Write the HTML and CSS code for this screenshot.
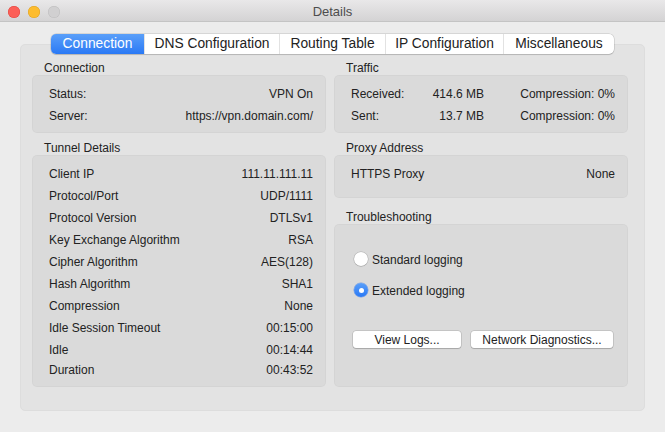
FILE: index.html
```html
<!DOCTYPE html>
<html lang="en">
<head>
<meta charset="utf-8">
<title>Details</title>
<link rel="stylesheet" href="styles.css">
</head>
<body>
<div class="window">
  <header class="titlebar">
    <div class="lights">
      <span class="light light-close"></span>
      <span class="light light-min"></span>
      <span class="light light-zoom"></span>
    </div>
    <div class="title">Details</div>
    <div></div>
  </header>
  <main class="content">
    <nav class="tabs">
      <span class="tab tab-conn selected">Connection</span>
      <span class="tab tab-dns">DNS Configuration</span>
      <span class="tab tab-route">Routing Table</span>
      <span class="tab tab-ip">IP Configuration</span>
      <span class="tab tab-misc">Miscellaneous</span>
    </nav>
    <section class="tabbox">
      <div class="col">
        <div class="group">
          <div class="group-label">Connection</div>
          <div class="group-box">
            <div class="row"><span>Status:</span><span>VPN On</span></div>
            <div class="row"><span>Server:</span><span>https://vpn.domain.com/</span></div>
          </div>
        </div>
        <div class="group group-next">
          <div class="group-label">Tunnel Details</div>
          <div class="group-box">
            <div class="row"><span>Client IP</span><span>111.11.111.11</span></div>
            <div class="row"><span>Protocol/Port</span><span>UDP/1111</span></div>
            <div class="row"><span>Protocol Version</span><span>DTLSv1</span></div>
            <div class="row"><span>Key Exchange Algorithm</span><span>RSA</span></div>
            <div class="row"><span>Cipher Algorithm</span><span>AES(128)</span></div>
            <div class="row"><span>Hash Algorithm</span><span>SHA1</span></div>
            <div class="row"><span>Compression</span><span>None</span></div>
            <div class="row"><span>Idle Session Timeout</span><span>00:15:00</span></div>
            <div class="row"><span>Idle</span><span>00:14:44</span></div>
            <div class="row row-last"><span>Duration</span><span>00:43:52</span></div>
          </div>
        </div>
      </div>
      <div class="col">
        <div class="group">
          <div class="group-label">Traffic</div>
          <div class="group-box">
            <div class="traffic-row">
              <div class="traffic-main"><span>Received:</span><span>414.6 MB</span></div>
              <span class="traffic-comp">Compression: 0%</span>
            </div>
            <div class="traffic-row">
              <div class="traffic-main"><span>Sent:</span><span>13.7 MB</span></div>
              <span class="traffic-comp">Compression: 0%</span>
            </div>
          </div>
        </div>
        <div class="group group-next">
          <div class="group-label">Proxy Address</div>
          <div class="group-box proxy-box">
            <div class="row"><span>HTTPS Proxy</span><span>None</span></div>
          </div>
        </div>
        <div class="group group-trouble">
          <div class="group-label">Troubleshooting</div>
          <div class="group-box trouble-box">
            <label class="radio-row"><span class="radio"></span><span class="radio-text">Standard logging</span></label>
            <label class="radio-row radio-row-second"><span class="radio radio-on"></span><span class="radio-text">Extended logging</span></label>
            <div class="buttons">
              <span class="btn btn-logs">View Logs...</span>
              <span class="btn btn-diag">Network Diagnostics...</span>
            </div>
          </div>
        </div>
      </div>
    </section>
  </main>
</div>
</body>
</html>
```

FILE: styles.css
```css
* { box-sizing: border-box; }

html, body {
  margin: 0;
  padding: 0;
}

body {
  width: 665px;
  height: 432px;
  overflow: hidden;
  background: #ececec;
  font-family: "Liberation Sans", Arial, sans-serif;
  font-size: 12px;
  color: #222222;
}

.window {
  width: 665px;
  height: 432px;
  background: #ececec;
}

.titlebar {
  height: 22px;
  display: grid;
  grid-template-columns: 1fr auto 1fr;
  align-items: center;
  background: linear-gradient(#e9e8e9, #d4d3d4);
  border-bottom: 1px solid #c4c4c4;
}

.lights {
  display: flex;
  gap: 8px;
  padding-left: 8px;
  padding-top: 1px;
}

.light {
  width: 12px;
  height: 12px;
  border-radius: 50%;
}

.light-close { background: #fc5f57; box-shadow: inset 0 0 0 0.5px #e0443e; }
.light-min { background: #fdbc2e; box-shadow: inset 0 0 0 0.5px #dea123; }
.light-zoom { background: #d1d0d1; box-shadow: inset 0 0 0 0.5px #bdbcbd; }

.title {
  color: #4d4d4d;
  font-size: 13px;
  line-height: 23px;
}

.content {
  padding-top: 12px;
}

.tabs {
  position: relative;
  z-index: 1;
  display: flex;
  width: 563px;
  height: 20px;
  margin: 0 auto -10px;
  background: #fff;
  border-radius: 5px;
  box-shadow: 0 0 0 0.5px rgba(0,0,0,0.18), 0 1px 1px rgba(0,0,0,0.12);
}

.tab {
  height: 20px;
  line-height: 20px;
  font-size: 13.8px;
  text-align: center;
  color: #222222;
  border-left: 1px solid #e2e2e2;
}

.tab:first-child { border-left: none; }

.tab-conn { width: 93px; }
.tab-dns { width: 135px; }
.tab-route { width: 106px; }
.tab-ip { width: 118px; }
.tab-misc { width: 111px; }

.tab.selected {
  color: #fff;
  background: linear-gradient(#5a9ff9, #2a79f5);
  border-radius: 5px 0 0 5px;
}

.tabbox {
  margin: 0 20px;
  height: 367px;
  background: #e3e3e3;
  border: 1px solid #dddddd;
  border-radius: 5px;
  padding: 14px 0 0 11px;
  display: grid;
  grid-template-columns: 294px 294px;
  column-gap: 8px;
  align-content: start;
}

.col {
  display: flex;
  flex-direction: column;
}

.group {
  display: flex;
  flex-direction: column;
}

.group-next { margin-top: 6px; }

.group-trouble {
  margin-top: 10px;
  flex: 1;
}

.group-label {
  height: 16px;
  line-height: 18px;
  padding-left: 12px;
}

.group-box {
  background: #dadada;
  border-radius: 5px;
  box-shadow: inset 0 0 0 1px rgba(0,0,0,0.025);
  padding: 7px 13px 7px 17px;
}

.row {
  display: flex;
  justify-content: space-between;
  height: 22px;
  line-height: 24px;
}

.row-last {
  height: 20px;
  line-height: 21px;
}

.traffic-row {
  display: grid;
  grid-template-columns: 133px 1fr;
  height: 22px;
  line-height: 24px;
}

.traffic-main {
  display: flex;
  justify-content: space-between;
}

.traffic-comp {
  text-align: right;
}

.proxy-box { padding-bottom: 14px; }

.trouble-box {
  flex: 1;
  padding: 25px 14px 0 20px;
}

.radio-row {
  display: flex;
  align-items: center;
  gap: 4px;
  height: 20px;
  line-height: 20px;
}

.radio-text {
  padding-top: 2px;
}

.radio-row-second { margin-top: 11px; }

.radio {
  width: 14px;
  height: 14px;
  border-radius: 50%;
  background: #fff;
  box-shadow: 0 0 0 0.5px rgba(0,0,0,0.2), 0 0.5px 1px rgba(0,0,0,0.15);
  display: flex;
  align-items: center;
  justify-content: center;
}

.radio-on {
  background: linear-gradient(#5a9ff9, #2a79f5);
  box-shadow: 0 0 0 0.5px rgba(30,100,230,0.5);
}

.radio-on::after {
  content: "";
  width: 5px;
  height: 5px;
  border-radius: 50%;
  background: #fff;
}

.buttons {
  display: flex;
  gap: 10px;
  margin-top: 31px;
  margin-left: -1px;
}

.btn {
  height: 17px;
  line-height: 18px;
  text-align: center;
  background: #fff;
  border-radius: 3px;
  box-shadow: 0 0 0 0.5px rgba(0,0,0,0.2), 0 1px 1px rgba(0,0,0,0.15);
}

.btn-logs { width: 108px; }
.btn-diag { width: 142px; }
```
